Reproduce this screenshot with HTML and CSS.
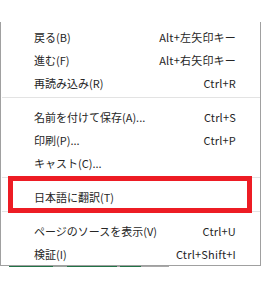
FILE: index.html
```html
<!DOCTYPE html>
<html lang="ja">
  <head>
    <meta charset="UTF-8" />
    <meta name="viewport" content="width=device-width, initial-scale=1.0" />
    <title>コンテキストメニュー</title>
    <link rel="stylesheet" href="styles.css">
  </head>
  <body>
    <div class="menu">
      <div class="item"><span>戻る(B)</span><span class="key">Alt+左矢印キー</span></div>
      <div class="item"><span>進む(F)</span><span class="key">Alt+右矢印キー</span></div>
      <div class="item"><span>再読み込み(R)</span><span class="key">Ctrl+R</span></div>
      <div class="sep"></div>
      <div class="item"><span>名前を付けて保存(A)...</span><span class="key">Ctrl+S</span></div>
      <div class="item"><span>印刷(P)...</span><span class="key">Ctrl+P</span></div>
      <div class="item"><span>キャスト(C)...</span></div>
      <div class="sep"></div>
      <div class="item marked"><span>日本語に翻訳(T)</span></div>
      <div class="sep"></div>
      <div class="item"><span>ページのソースを表示(V)</span><span class="key">Ctrl+U</span></div>
      <div class="item"><span>検証(I)</span><span class="key">Ctrl+Shift+I</span></div>
    </div>
    <div class="behind"></div>
  </body>
</html>
```

FILE: styles.css
```css
body {
    margin: 0;
    background: #fff;
    font-family: "Noto Sans CJK JP", "Noto Sans", sans-serif;
    font-size: 11px;
    color: #262626;
}

.menu {
    margin-top: 22px;
    width: 259px;
    border: 1px solid #a0a0a0;
    border-top: none;
    padding: 3px 0 0;
    position: relative;
}

.item {
    display: flex;
    justify-content: space-between;
    align-items: center;
    height: 23px;
    padding: 0 24px 0 33px;
    position: relative;
}

.key {
    letter-spacing: 0.2px;
}

.sep {
    height: 1px;
    background: #e3e3e3;
    margin: 3px 0 7px 1px;
}

.marked::after {
    content: "";
    position: absolute;
    left: 7px;
    right: 8px;
    top: -9px;
    bottom: -5px;
    border: 5px solid #ed1c24;
}

.behind {
    height: 1px;
    width: 160px;
    margin-left: 9px;
    background: linear-gradient(to right, #217346 0 44px, #9aa59d 44px 58px, #217346 58px 108px, #a4a4a4 108px 111px, #217346 111px 132px, #a8a8a8 132px);
}
```
